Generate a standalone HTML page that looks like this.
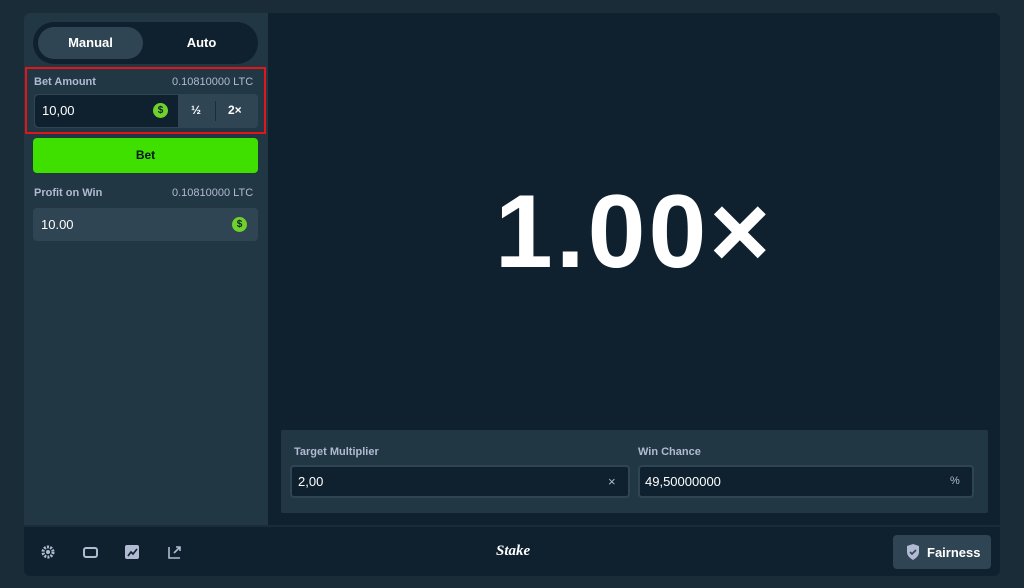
<!DOCTYPE html>
<html><head><style>
*{margin:0;padding:0;box-sizing:border-box}
body{width:1024px;height:588px;background:#1a2c38;font-family:"Liberation Sans",sans-serif;position:relative;overflow:hidden;color:#fff}
.a{position:absolute}
.lbl{font-size:11px;font-weight:bold;color:#b1bad3}
.coin{width:15px;height:15px;border-radius:50%;background:#6fd12a;color:#0f212e;font-size:10px;font-weight:bold;text-align:center;line-height:15px}
</style></head><body>
<div class="a" style="left:24px;top:13px;width:976px;height:563px;background:#0f212e;border-radius:6px"></div>
<div class="a" style="left:24px;top:13px;width:244px;height:513px;background:#213743;border-radius:6px 0 0 0"></div>
<div class="a" style="left:24px;top:525px;width:976px;height:2px;background:#1a2c38"></div>
<div class="a" style="left:33px;top:22px;width:225px;height:42px;background:#0f212e;border-radius:21px"></div>
<div class="a" style="left:38px;top:27px;width:105px;height:32px;background:#2f4553;border-radius:16px;font-size:13px;font-weight:bold;text-align:center;line-height:32px">Manual</div>
<div class="a" style="left:150px;top:27px;width:103px;height:32px;font-size:13px;font-weight:bold;text-align:center;line-height:32px">Auto</div>
<div class="a" style="left:25px;top:67px;width:241px;height:67px;border:2.5px solid #e0161b"></div>
<div class="a lbl" style="left:34px;top:76px">Bet Amount</div>
<div class="a" style="left:172px;top:76px;font-size:11px;color:#b1bad3">0.10810000 LTC</div>
<div class="a" style="left:34px;top:94px;width:224px;height:34px;background:#2f4553;border-radius:4px"></div>
<div class="a" style="left:35px;top:95px;width:143px;height:32px;background:#0f212e;border-radius:4px 0 0 4px"></div>
<div class="a" style="left:42px;top:103px;font-size:13px">10,00</div>
<div class="a coin" style="left:153px;top:103px">$</div>
<div class="a" style="left:191px;top:103px;font-size:12px;font-weight:bold">½</div>
<div class="a" style="left:215px;top:101px;width:1px;height:20px;background:#1a2c38"></div>
<div class="a" style="left:228px;top:103px;font-size:12px;font-weight:bold">2×</div>
<div class="a" style="left:33px;top:138px;width:225px;height:35px;background:#3fe000;border-radius:4px;color:#05121b;font-size:12px;font-weight:bold;text-align:center;line-height:35px">Bet</div>
<div class="a lbl" style="left:34px;top:187px">Profit on Win</div>
<div class="a" style="left:172px;top:187px;font-size:11px;color:#b1bad3">0.10810000 LTC</div>
<div class="a" style="left:33px;top:208px;width:225px;height:33px;background:#2f4553;border-radius:4px"></div>
<div class="a" style="left:41px;top:217px;font-size:13px">10.00</div>
<div class="a coin" style="left:232px;top:217px">$</div>
<div class="a" style="left:268px;top:173px;width:732px;text-align:center;font-size:104px;font-weight:bold;letter-spacing:3px">1.00×</div>
<div class="a" style="left:281px;top:430px;width:707px;height:83px;background:#213743;border-radius:2px"></div>
<div class="a lbl" style="left:294px;top:446px">Target Multiplier</div>
<div class="a lbl" style="left:638px;top:446px">Win Chance</div>
<div class="a" style="left:290px;top:465px;width:340px;height:33px;background:#0f212e;border:2px solid #2f4553;border-radius:4px"></div>
<div class="a" style="left:298px;top:474px;font-size:13px">2,00</div>
<div class="a" style="left:608px;top:474px;font-size:13px;color:#b1bad3">×</div>
<div class="a" style="left:638px;top:465px;width:336px;height:33px;background:#0f212e;border:2px solid #2f4553;border-radius:4px"></div>
<div class="a" style="left:645px;top:474px;font-size:13px">49,50000000</div>
<div class="a" style="left:950px;top:475px;font-size:11px;color:#b1bad3">%</div>
<svg class="a" style="left:40px;top:544px" width="150" height="16" viewBox="0 0 150 16">
<circle cx="8" cy="8" r="5" fill="none" stroke="#b1bad3" stroke-width="3" stroke-dasharray="2 1.2"/><circle cx="8" cy="8" r="2" fill="#b1bad3"/>
<rect x="44" y="4" width="13" height="9" rx="2" fill="none" stroke="#b1bad3" stroke-width="2"/>
<rect x="85" y="1" width="14" height="14" rx="2" fill="#b1bad3"/><path d="M88 12l3-4 2 2 4-5" stroke="#0f212e" stroke-width="1.6" fill="none"/>
<path d="M129 3v11h11M134 9l6-6M136 3h4v4" stroke="#b1bad3" stroke-width="1.6" fill="none"/>
</svg>
<div class="a" style="left:496px;top:543px;font-family:'Liberation Serif',serif;font-style:italic;font-weight:bold;font-size:15px">Stake</div>
<div class="a" style="left:893px;top:535px;width:98px;height:34px;background:#2f4553;border-radius:4px"></div>
<svg class="a" style="left:906px;top:544px" width="14" height="16" viewBox="0 0 14 16"><path d="M1 2l6-2 6 2v6c0 4-3 6-6 8-3-2-6-4-6-8z" fill="#b1bad3"/><path d="M4 8l2 2 4-4" stroke="#2f4553" stroke-width="1.6" fill="none"/></svg>
<div class="a" style="left:927px;top:545px;font-size:13px;font-weight:bold">Fairness</div>
</body></html>
